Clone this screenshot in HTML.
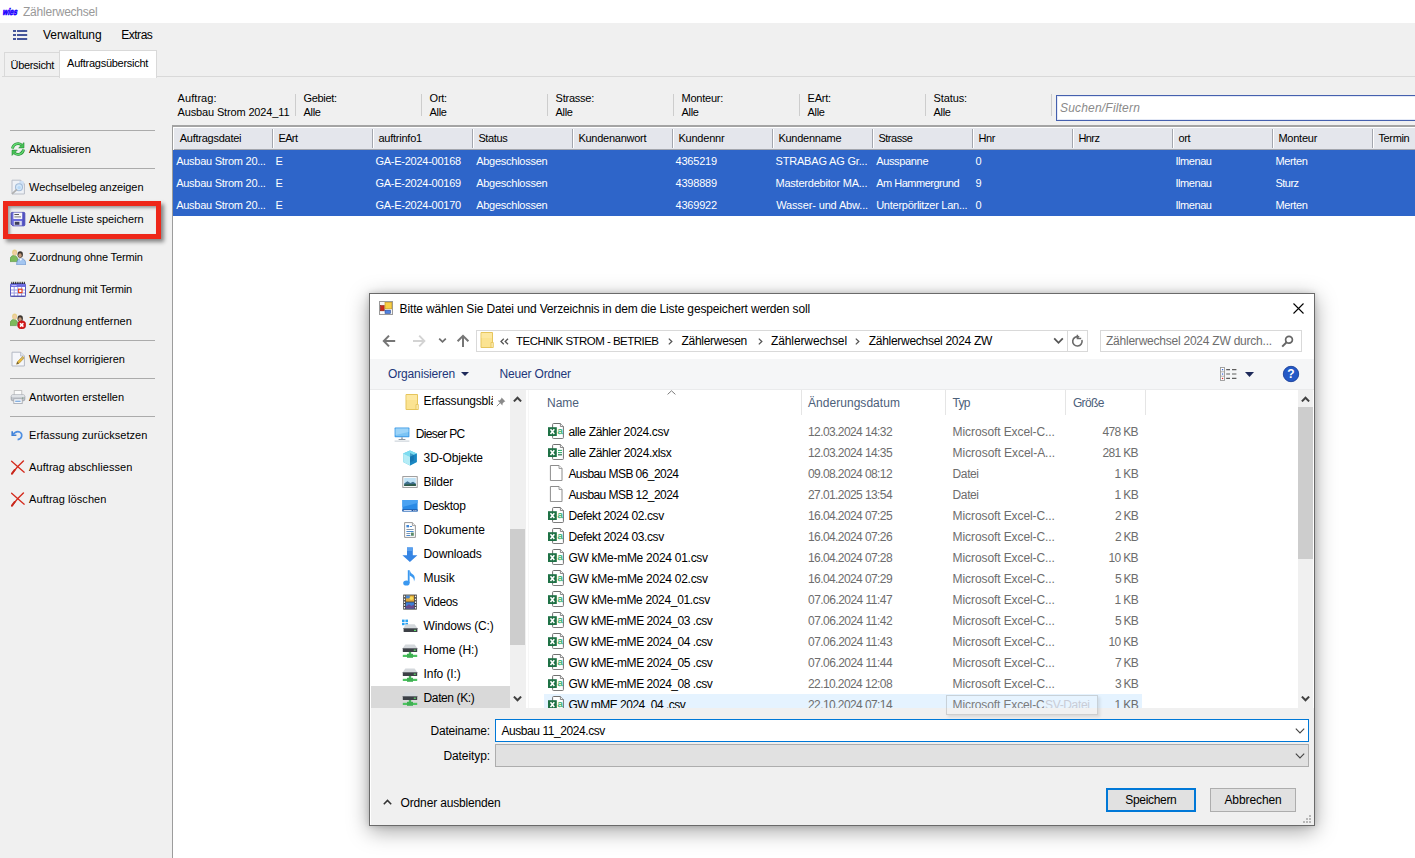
<!DOCTYPE html>
<html lang="de">
<head>
<meta charset="utf-8">
<title>Zählerwechsel</title>
<style>
*{box-sizing:border-box;margin:0;padding:0}
html,body{width:1415px;height:858px;overflow:hidden;background:#f0f0f0;font-family:"Liberation Sans",sans-serif;font-size:11px;color:#000}
.a{position:absolute}
.t{position:absolute;white-space:nowrap}
</style>
</head>
<body>
<div class="a" style="left:0px;top:0px;width:1415px;height:23px;background:#fff;"></div>
<svg class="a" style="left:2px;top:5px" width="17" height="11" viewBox="0 0 17 11"><g transform="skewX(-14)"><text x="2.6" y="9.7" font-family="Liberation Sans" font-weight="bold" font-size="9.5" textLength="14.6" lengthAdjust="spacingAndGlyphs" fill="#1c00ff" stroke="#1c00ff" stroke-width=".7">wies</text></g></svg>
<div class="t" style="left:23.0px;top:3.7px;font-size:12px;line-height:16px;color:#999;letter-spacing:-0.22px;">Zählerwechsel</div>
<svg class="a" style="left:13px;top:30px" width="15" height="10" viewBox="0 0 15 10"><g fill="#44549a"><rect x="0" y="0" width="3" height="2"/><rect x="4" y="0" width="10.2" height="2"/><rect x="0" y="4" width="3" height="2"/><rect x="4" y="4" width="10.2" height="2"/><rect x="0" y="8" width="3" height="2"/><rect x="4" y="8" width="10.2" height="2"/></g></svg>
<div class="t" style="left:43.1px;top:26.6px;font-size:12px;line-height:16px;letter-spacing:-0.10px;">Verwaltung</div>
<div class="t" style="left:121.2px;top:26.6px;font-size:12px;line-height:16px;letter-spacing:-0.47px;">Extras</div>
<div class="a" style="left:4px;top:52px;width:56px;height:25px;background:#f0f0f0;border:1px solid #d9d9d9;border-bottom:none"></div>
<div class="a" style="left:2px;top:76px;width:1413px;height:1px;background:#d9d9d9;"></div>
<div class="t" style="left:10.6px;top:57.6px;font-size:11px;line-height:14px;letter-spacing:-0.33px;">Übersicht</div>
<div class="a" style="left:59px;top:50px;width:98px;height:28px;background:#fff;border:1px solid #d9d9d9;border-bottom:none"></div>
<div class="t" style="left:67.1px;top:56.0px;font-size:11px;line-height:14px;letter-spacing:-0.27px;">Auftragsübersicht</div>
<div class="a" style="left:10px;top:130px;width:145px;height:1px;background:#ababab;"></div>
<div class="a" style="left:10px;top:168px;width:145px;height:1px;background:#ababab;"></div>
<div class="a" style="left:10px;top:340px;width:145px;height:1px;background:#ababab;"></div>
<div class="a" style="left:10px;top:378px;width:145px;height:1px;background:#ababab;"></div>
<div class="a" style="left:10px;top:416px;width:145px;height:1px;background:#ababab;"></div>
<svg class="a" style="left:10px;top:141px" width="16" height="16" viewBox="0 0 16 16"><path d="M2.5 7.5 A5.5 5.5 0 0 1 11.6 4" fill="none" stroke="#238d33" stroke-width="2.7"/><path d="M2.5 7.5 A5.5 5.5 0 0 1 11.6 4" fill="none" stroke="#62d670" stroke-width="1.4"/><path d="M14 1.6 V6.9 H8.7 Z" fill="#46c255" stroke="#238d33" stroke-width=".6"/><g transform="rotate(180 8 8)"><path d="M2.5 7.5 A5.5 5.5 0 0 1 11.6 4" fill="none" stroke="#238d33" stroke-width="2.7"/><path d="M2.5 7.5 A5.5 5.5 0 0 1 11.6 4" fill="none" stroke="#62d670" stroke-width="1.4"/><path d="M14 1.6 V6.9 H8.7 Z" fill="#46c255" stroke="#238d33" stroke-width=".6"/></g></svg>
<div class="t" style="left:29.1px;top:142.0px;font-size:11px;line-height:14px;letter-spacing:-0.11px;">Aktualisieren</div>
<svg class="a" style="left:10px;top:179px" width="16" height="16" viewBox="0 0 16 16"><path d="M2 1.2 H10.6 L14.4 5 V15 H2 Z" fill="#eef1f6" stroke="#b9bec8" stroke-width="1"/><path d="M10.6 1.2 V5 H14.4" fill="#cfe0f4" stroke="#b9bec8" stroke-width=".8"/><rect x="9" y="2" width="4.6" height="5" fill="#cfe2f8" opacity=".8"/><circle cx="9" cy="8.2" r="3.5" fill="#d4e8fa" stroke="#a4bcd8" stroke-width="1.1"/><circle cx="9.2" cy="8.6" r="1.7" fill="#b8d8f6"/><path d="M6.4 10.8 L2.6 14.4" stroke="#b0b0b0" stroke-width="1.7" stroke-linecap="round"/></svg>
<div class="t" style="left:29.1px;top:180.0px;font-size:11px;line-height:14px;letter-spacing:-0.11px;">Wechselbeleg anzeigen</div>
<svg class="a" style="left:10px;top:211px" width="16" height="16" viewBox="0 0 16 16"><path d="M1.2 2.4 Q1.2 1.4 2.2 1.4 H13.8 Q14.8 1.4 14.8 2.4 V13.8 Q14.8 14.8 13.8 14.8 H2.8 L1.2 13.2 Z" fill="#6c6cdc" stroke="#4a4ab4" stroke-width="1"/><path d="M12.4 1.6 H14.4 V14.4 H12.4 Z" fill="#5050be"/><rect x="3.4" y="1.6" width="8.8" height="6.4" fill="#f6f6fb"/><rect x="4.4" y="3" width="4.6" height="1" fill="#555"/><rect x="4.4" y="5.4" width="6.6" height="1" fill="#777"/><rect x="3.8" y="10" width="8" height="4.4" fill="#dcdcf0"/><rect x="4.8" y="10.8" width="4.6" height="3" fill="#3c3c5a"/></svg>
<div class="t" style="left:29.1px;top:212.0px;font-size:11px;line-height:14px;letter-spacing:-0.07px;">Aktuelle Liste speichern</div>
<svg class="a" style="left:10px;top:249px" width="16" height="16" viewBox="0 0 16 16"><path d="M-.2 12.6 Q-.2 6.6 3.8 6.4 Q8 6.6 8 12.6 Z" fill="#7dbb5c" stroke="#4f8f38" stroke-width=".6"/><ellipse cx="4.6" cy="3.4" rx="2.5" ry="3" fill="#e6cf86"/><ellipse cx="4.8" cy="4" rx="1.6" ry="2" fill="#f1cda6"/><ellipse cx="10.2" cy="5.6" rx="2.7" ry="3.3" fill="#3c3630"/><ellipse cx="10" cy="6.4" rx="1.7" ry="2.2" fill="#c49a78"/><path d="M6.6 15.8 Q6.6 9.6 10.8 9.4 Q15.9 9.6 15.9 15.8 Z" fill="#a4c6f0" stroke="#5a86c4" stroke-width=".6"/><path d="M9.4 9.6 L10.8 12 L12.2 9.6 Z" fill="#fff"/></svg>
<div class="t" style="left:29.1px;top:250.0px;font-size:11px;line-height:14px;letter-spacing:-0.14px;">Zuordnung ohne Termin</div>
<svg class="a" style="left:10px;top:281px" width="16" height="16" viewBox="0 0 16 16"><rect x=".5" y="2.6" width="15" height="13" rx="1" fill="#fff" stroke="#5a5ac0" stroke-width="1"/><rect x=".5" y="3" width="15" height="3" fill="#6e6ee2"/><rect x="1.6" y="4" width="5" height="1" fill="#b8b8f4"/><g stroke="#1a1a1a" stroke-width=".9"><path d="M1.8 .8V3M3.6 .8V3M5.4 .8V3M7.2 .8V3M9 .8V3M10.8 .8V3M12.6 .8V3M14.4 .8V3"/></g><g stroke="#9a9ae0" stroke-width="1"><path d="M1 9H15M1 12H15M4.2 6V15M7.8 6V15M11.6 6V15"/></g><rect x=".5" y="14.6" width="15" height="1" fill="#4a4aa8"/><rect x="8.6" y="8.2" width="3.4" height="3.4" fill="#fff" stroke="#e8401c" stroke-width="1.2"/></svg>
<div class="t" style="left:29.1px;top:282.0px;font-size:11px;line-height:14px;letter-spacing:-0.20px;">Zuordnung mit Termin</div>
<svg class="a" style="left:10px;top:313px" width="16" height="16" viewBox="0 0 16 16"><path d="M-.2 12.6 Q-.2 6.6 3.8 6.4 Q8 6.6 8 12.6 Z" fill="#7dbb5c" stroke="#4f8f38" stroke-width=".6"/><ellipse cx="4.6" cy="3.4" rx="2.5" ry="3" fill="#e6cf86"/><ellipse cx="4.8" cy="4" rx="1.6" ry="2" fill="#f1cda6"/><ellipse cx="10.2" cy="5.6" rx="2.7" ry="3.3" fill="#3c3630"/><ellipse cx="10" cy="6.4" rx="1.7" ry="2.2" fill="#c49a78"/><path d="M6.6 13 Q6.6 9.6 9 9.4 V13 Z" fill="#a4c6f0"/><circle cx="11.7" cy="11.9" r="4.1" fill="#d41818" stroke="#a80c0c" stroke-width=".5"/><path d="M10 10.2 L13.4 13.6 M13.4 10.2 L10 13.6" stroke="#fff" stroke-width="1.6"/></svg>
<div class="t" style="left:29.1px;top:314.0px;font-size:11px;line-height:14px;">Zuordnung entfernen</div>
<svg class="a" style="left:10px;top:351px" width="16" height="16" viewBox="0 0 16 16"><path d="M2 1.2 H10.6 L14.4 5 V15 H2 Z" fill="#f5f6fa" stroke="#b4b9c4" stroke-width="1"/><path d="M10.6 1.2 V5 H14.4" fill="#dfe4ee" stroke="#b4b9c4" stroke-width=".8"/><path d="M12.6 5.4 L14.2 7 L9 12.4 L6.6 13.2 L7.4 10.8 Z" fill="#e8bc40" stroke="#b08a24" stroke-width=".6"/><path d="M6.6 13.2 L7.4 10.8 L9 12.4 Z" fill="#6a5a3a"/><path d="M11.6 6.4 L13.2 8" stroke="#8aa0c0" stroke-width=".8"/></svg>
<div class="t" style="left:29.1px;top:352.0px;font-size:11px;line-height:14px;letter-spacing:-0.07px;">Wechsel korrigieren</div>
<svg class="a" style="left:10px;top:389px" width="16" height="16" viewBox="0 0 16 16"><rect x="4.2" y="1.6" width="7.6" height="4.8" fill="#fbfbfb" stroke="#b8b8b8" stroke-width=".8"/><rect x="1.2" y="5.8" width="13.6" height="6" rx="1.6" fill="#c2c6cc" stroke="#969aa2" stroke-width=".8"/><rect x="1.4" y="5.8" width="13.2" height="2.4" rx="1.2" fill="#dfe2e6"/><rect x="3.8" y="9.8" width="8.4" height="4.8" fill="#f6f8fb" stroke="#a2a6ae" stroke-width=".8"/><rect x="5.2" y="11.6" width="5.4" height="1.4" fill="#86b0e0"/><rect x="12" y="8.6" width="1.4" height=".9" fill="#6a8a6a"/></svg>
<div class="t" style="left:29.1px;top:390.0px;font-size:11px;line-height:14px;letter-spacing:0.05px;">Antworten erstellen</div>
<svg class="a" style="left:10px;top:427px" width="16" height="16" viewBox="0 0 16 16"><path d="M2.2 4.2 V8.2 H6.4" fill="none" stroke="#3f7fd4" stroke-width="1.6"/><path d="M2.8 7.8 Q5.4 4 9 4.8 Q12.4 6 11.6 9.6 Q10.8 12.2 7.6 12.6" fill="none" stroke="#4f8fe2" stroke-width="1.7"/></svg>
<div class="t" style="left:29.1px;top:428.0px;font-size:11px;line-height:14px;letter-spacing:0.04px;">Erfassung zurücksetzen</div>
<svg class="a" style="left:10px;top:459px" width="16" height="16" viewBox="0 0 16 16"><path d="M1.6 2.2 Q7 7 14.2 13.2" fill="none" stroke="#d42a1c" stroke-width="1.3" stroke-linecap="round"/><path d="M13.4 2 Q8 6.6 2 14.6" fill="none" stroke="#d42a1c" stroke-width="1.5" stroke-linecap="round"/><path d="M4.6 11 L2 14.6" stroke="#c8281c" stroke-width="2" stroke-linecap="round"/></svg>
<div class="t" style="left:29.1px;top:460.0px;font-size:11px;line-height:14px;letter-spacing:0.06px;">Auftrag abschliessen</div>
<svg class="a" style="left:10px;top:491px" width="16" height="16" viewBox="0 0 16 16"><path d="M1.6 2.2 Q7 7 14.2 13.2" fill="none" stroke="#d42a1c" stroke-width="1.3" stroke-linecap="round"/><path d="M13.4 2 Q8 6.6 2 14.6" fill="none" stroke="#d42a1c" stroke-width="1.5" stroke-linecap="round"/><path d="M4.6 11 L2 14.6" stroke="#c8281c" stroke-width="2" stroke-linecap="round"/></svg>
<div class="t" style="left:29.1px;top:492.0px;font-size:11px;line-height:14px;letter-spacing:0.06px;">Auftrag löschen</div>
<div class="a" style="left:3px;top:201px;width:158px;height:38px;border:5px solid #ee2719;box-shadow:3px 3px 4px rgba(0,0,0,.45), inset 2px 2px 3px rgba(0,0,0,.35)"></div>
<div class="t" style="left:177.6px;top:91.3px;font-size:11px;line-height:14px;letter-spacing:0.06px;">Auftrag:</div>
<div class="t" style="left:177.6px;top:105.0px;font-size:11px;line-height:14px;letter-spacing:-0.15px;">Ausbau Strom 2024_11</div>
<div class="a" style="left:295px;top:94px;width:1px;height:22px;background:#cdcdcd;"></div>
<div class="t" style="left:303.6px;top:91.3px;font-size:11px;line-height:14px;letter-spacing:-0.35px;">Gebiet:</div>
<div class="t" style="left:303.6px;top:105.0px;font-size:11px;line-height:14px;letter-spacing:-0.34px;">Alle</div>
<div class="a" style="left:421px;top:94px;width:1px;height:22px;background:#cdcdcd;"></div>
<div class="t" style="left:429.6px;top:91.3px;font-size:11px;line-height:14px;letter-spacing:-0.25px;">Ort:</div>
<div class="t" style="left:429.6px;top:105.0px;font-size:11px;line-height:14px;letter-spacing:-0.34px;">Alle</div>
<div class="a" style="left:547px;top:94px;width:1px;height:22px;background:#cdcdcd;"></div>
<div class="t" style="left:555.6px;top:91.3px;font-size:11px;line-height:14px;letter-spacing:-0.25px;">Strasse:</div>
<div class="t" style="left:555.6px;top:105.0px;font-size:11px;line-height:14px;letter-spacing:-0.34px;">Alle</div>
<div class="a" style="left:673px;top:94px;width:1px;height:22px;background:#cdcdcd;"></div>
<div class="t" style="left:681.6px;top:91.3px;font-size:11px;line-height:14px;letter-spacing:-0.25px;">Monteur:</div>
<div class="t" style="left:681.6px;top:105.0px;font-size:11px;line-height:14px;letter-spacing:-0.34px;">Alle</div>
<div class="a" style="left:799px;top:94px;width:1px;height:22px;background:#cdcdcd;"></div>
<div class="t" style="left:807.6px;top:91.3px;font-size:11px;line-height:14px;letter-spacing:-0.25px;">EArt:</div>
<div class="t" style="left:807.6px;top:105.0px;font-size:11px;line-height:14px;letter-spacing:-0.34px;">Alle</div>
<div class="a" style="left:925px;top:94px;width:1px;height:22px;background:#cdcdcd;"></div>
<div class="t" style="left:933.6px;top:91.3px;font-size:11px;line-height:14px;letter-spacing:-0.12px;">Status:</div>
<div class="t" style="left:933.6px;top:105.0px;font-size:11px;line-height:14px;letter-spacing:-0.34px;">Alle</div>
<div class="a" style="left:1051px;top:94px;width:1px;height:22px;background:#cdcdcd;"></div>
<div class="a" style="left:1056px;top:95px;width:365px;height:26px;background:#fff;border:1px solid #4560ae;box-shadow:inset 0 0 0 1px #e4e9f6"></div>
<div class="t" style="left:1060.0px;top:100.5px;font-size:12px;line-height:15px;color:#8a8a8a;letter-spacing:0.19px;font-style:italic;">Suchen/Filtern</div>
<div class="a" style="left:172px;top:125px;width:1243px;height:733px;background:#fff;border-left:1px solid #9c9c9c;border-top:2px solid #a4a4a4"></div>
<div class="a" style="left:174px;top:128px;width:1241px;height:22px;background:#e4e6ec;border-bottom:1px solid #a3a6ae"></div>
<div class="a" style="left:272px;top:129px;width:1px;height:19px;background:#a3a6ae;"></div>
<div class="a" style="left:273px;top:129px;width:1px;height:19px;background:#fff;"></div>
<div class="t" style="left:179.8px;top:131.4px;font-size:11px;line-height:14px;letter-spacing:-0.26px;">Auftragsdatei</div>
<div class="a" style="left:372px;top:129px;width:1px;height:19px;background:#a3a6ae;"></div>
<div class="a" style="left:373px;top:129px;width:1px;height:19px;background:#fff;"></div>
<div class="t" style="left:278.4px;top:131.4px;font-size:11px;line-height:14px;letter-spacing:-0.60px;">EArt</div>
<div class="a" style="left:472px;top:129px;width:1px;height:19px;background:#a3a6ae;"></div>
<div class="a" style="left:473px;top:129px;width:1px;height:19px;background:#fff;"></div>
<div class="t" style="left:378.4px;top:131.4px;font-size:11px;line-height:14px;letter-spacing:-0.23px;">auftrinfo1</div>
<div class="a" style="left:572px;top:129px;width:1px;height:19px;background:#a3a6ae;"></div>
<div class="a" style="left:573px;top:129px;width:1px;height:19px;background:#fff;"></div>
<div class="t" style="left:478.4px;top:131.4px;font-size:11px;line-height:14px;letter-spacing:-0.36px;">Status</div>
<div class="a" style="left:672px;top:129px;width:1px;height:19px;background:#a3a6ae;"></div>
<div class="a" style="left:673px;top:129px;width:1px;height:19px;background:#fff;"></div>
<div class="t" style="left:578.4px;top:131.4px;font-size:11px;line-height:14px;letter-spacing:-0.25px;">Kundenanwort</div>
<div class="a" style="left:772px;top:129px;width:1px;height:19px;background:#a3a6ae;"></div>
<div class="a" style="left:773px;top:129px;width:1px;height:19px;background:#fff;"></div>
<div class="t" style="left:678.4px;top:131.4px;font-size:11px;line-height:14px;letter-spacing:-0.21px;">Kundennr</div>
<div class="a" style="left:872px;top:129px;width:1px;height:19px;background:#a3a6ae;"></div>
<div class="a" style="left:873px;top:129px;width:1px;height:19px;background:#fff;"></div>
<div class="t" style="left:778.4px;top:131.4px;font-size:11px;line-height:14px;letter-spacing:-0.25px;">Kundenname</div>
<div class="a" style="left:972px;top:129px;width:1px;height:19px;background:#a3a6ae;"></div>
<div class="a" style="left:973px;top:129px;width:1px;height:19px;background:#fff;"></div>
<div class="t" style="left:878.4px;top:131.4px;font-size:11px;line-height:14px;letter-spacing:-0.47px;">Strasse</div>
<div class="a" style="left:1072px;top:129px;width:1px;height:19px;background:#a3a6ae;"></div>
<div class="a" style="left:1073px;top:129px;width:1px;height:19px;background:#fff;"></div>
<div class="t" style="left:978.4px;top:131.4px;font-size:11px;line-height:14px;letter-spacing:-0.38px;">Hnr</div>
<div class="a" style="left:1172px;top:129px;width:1px;height:19px;background:#a3a6ae;"></div>
<div class="a" style="left:1173px;top:129px;width:1px;height:19px;background:#fff;"></div>
<div class="t" style="left:1078.4px;top:131.4px;font-size:11px;line-height:14px;letter-spacing:-0.56px;">Hnrz</div>
<div class="a" style="left:1272px;top:129px;width:1px;height:19px;background:#a3a6ae;"></div>
<div class="a" style="left:1273px;top:129px;width:1px;height:19px;background:#fff;"></div>
<div class="t" style="left:1178.4px;top:131.4px;font-size:11px;line-height:14px;letter-spacing:-0.28px;">ort</div>
<div class="a" style="left:1372px;top:129px;width:1px;height:19px;background:#a3a6ae;"></div>
<div class="a" style="left:1373px;top:129px;width:1px;height:19px;background:#fff;"></div>
<div class="t" style="left:1278.4px;top:131.4px;font-size:11px;line-height:14px;letter-spacing:-0.24px;">Monteur</div>
<div class="a" style="left:1472px;top:129px;width:1px;height:19px;background:#a3a6ae;"></div>
<div class="a" style="left:1473px;top:129px;width:1px;height:19px;background:#fff;"></div>
<div class="t" style="left:1378.4px;top:131.4px;font-size:11px;line-height:14px;letter-spacing:-0.34px;">Termin</div>
<div class="a" style="left:173px;top:150px;width:1242px;height:22px;background:#2e65c9;"></div>
<div class="t" style="left:176.2px;top:154.3px;font-size:11px;line-height:14px;color:#fff;letter-spacing:-0.26px;">Ausbau Strom 20...</div>
<div class="t" style="left:275.5px;top:154.3px;font-size:11px;line-height:14px;color:#fff;">E</div>
<div class="t" style="left:375.5px;top:154.3px;font-size:11px;line-height:14px;color:#fff;letter-spacing:-0.26px;">GA-E-2024-00168</div>
<div class="t" style="left:476.2px;top:154.3px;font-size:11px;line-height:14px;color:#fff;letter-spacing:-0.26px;">Abgeschlossen</div>
<div class="t" style="left:675.5px;top:154.3px;font-size:11px;line-height:14px;color:#fff;letter-spacing:-0.20px;">4365219</div>
<div class="t" style="left:775.5px;top:154.3px;font-size:11px;line-height:14px;color:#fff;letter-spacing:-0.18px;">STRABAG AG Gr...</div>
<div class="t" style="left:876.2px;top:154.3px;font-size:11px;line-height:14px;color:#fff;letter-spacing:-0.34px;">Ausspanne</div>
<div class="t" style="left:975.5px;top:154.3px;font-size:11px;line-height:14px;color:#fff;">0</div>
<div class="t" style="left:1175.5px;top:154.3px;font-size:11px;line-height:14px;color:#fff;letter-spacing:-0.45px;">Ilmenau</div>
<div class="t" style="left:1275.5px;top:154.3px;font-size:11px;line-height:14px;color:#fff;letter-spacing:-0.38px;">Merten</div>
<div class="a" style="left:173px;top:172px;width:1242px;height:22px;background:#2e65c9;"></div>
<div class="t" style="left:176.2px;top:176.3px;font-size:11px;line-height:14px;color:#fff;letter-spacing:-0.26px;">Ausbau Strom 20...</div>
<div class="t" style="left:275.5px;top:176.3px;font-size:11px;line-height:14px;color:#fff;">E</div>
<div class="t" style="left:375.5px;top:176.3px;font-size:11px;line-height:14px;color:#fff;letter-spacing:-0.26px;">GA-E-2024-00169</div>
<div class="t" style="left:476.2px;top:176.3px;font-size:11px;line-height:14px;color:#fff;letter-spacing:-0.26px;">Abgeschlossen</div>
<div class="t" style="left:675.5px;top:176.3px;font-size:11px;line-height:14px;color:#fff;letter-spacing:-0.20px;">4398889</div>
<div class="t" style="left:775.5px;top:176.3px;font-size:11px;line-height:14px;color:#fff;letter-spacing:-0.22px;">Masterdebitor MA...</div>
<div class="t" style="left:876.2px;top:176.3px;font-size:11px;line-height:14px;color:#fff;letter-spacing:-0.50px;">Am Hammergrund</div>
<div class="t" style="left:975.5px;top:176.3px;font-size:11px;line-height:14px;color:#fff;">9</div>
<div class="t" style="left:1175.5px;top:176.3px;font-size:11px;line-height:14px;color:#fff;letter-spacing:-0.45px;">Ilmenau</div>
<div class="t" style="left:1275.5px;top:176.3px;font-size:11px;line-height:14px;color:#fff;letter-spacing:-0.54px;">Sturz</div>
<div class="a" style="left:173px;top:194px;width:1242px;height:22px;background:#2e65c9;"></div>
<div class="t" style="left:176.2px;top:198.3px;font-size:11px;line-height:14px;color:#fff;letter-spacing:-0.26px;">Ausbau Strom 20...</div>
<div class="t" style="left:275.5px;top:198.3px;font-size:11px;line-height:14px;color:#fff;">E</div>
<div class="t" style="left:375.5px;top:198.3px;font-size:11px;line-height:14px;color:#fff;letter-spacing:-0.26px;">GA-E-2024-00170</div>
<div class="t" style="left:476.2px;top:198.3px;font-size:11px;line-height:14px;color:#fff;letter-spacing:-0.26px;">Abgeschlossen</div>
<div class="t" style="left:675.5px;top:198.3px;font-size:11px;line-height:14px;color:#fff;letter-spacing:-0.20px;">4369922</div>
<div class="t" style="left:776.2px;top:198.3px;font-size:11px;line-height:14px;color:#fff;letter-spacing:-0.14px;">Wasser- und Abw...</div>
<div class="t" style="left:876.2px;top:198.3px;font-size:11px;line-height:14px;color:#fff;letter-spacing:-0.26px;">Unterpörlitzer Lan...</div>
<div class="t" style="left:975.5px;top:198.3px;font-size:11px;line-height:14px;color:#fff;">0</div>
<div class="t" style="left:1175.5px;top:198.3px;font-size:11px;line-height:14px;color:#fff;letter-spacing:-0.45px;">Ilmenau</div>
<div class="t" style="left:1275.5px;top:198.3px;font-size:11px;line-height:14px;color:#fff;letter-spacing:-0.38px;">Merten</div>
<div class="a" style="left:369px;top:293px;width:946px;height:533px;background:#fff;border:1px solid #6a6a6a;box-shadow:0 5px 20px rgba(0,0,0,.36),0 0 6px rgba(0,0,0,.16)"></div>
<svg class="a" style="left:379px;top:301px" width="14" height="14" viewBox="0 0 14 14"><rect x=".5" y=".5" width="13" height="13" fill="#f4f4f4" stroke="#9a9a9a"/><rect x="1.4" y="4.6" width="3.8" height="5.2" fill="#c8281c" stroke="#8a1a10" stroke-width=".6"/><rect x="6" y="1.4" width="6.8" height="6.4" fill="#f7cf45" stroke="#c89a20" stroke-width=".7"/><rect x="6" y="9.2" width="5.4" height="3.2" fill="#4f82e0" stroke="#2a4a98" stroke-width=".6"/><rect x="1.4" y="10.8" width="1.6" height="1.8" fill="#fff"/><rect x="3.6" y="10.8" width="1.6" height="1.8" fill="#fff"/></svg>
<div class="t" style="left:399.6px;top:301.0px;font-size:12px;line-height:16px;letter-spacing:-0.15px;">Bitte wählen Sie Datei und Verzeichnis in dem die Liste gespeichert werden soll</div>
<svg class="a" style="left:1293px;top:303px" width="11" height="11" viewBox="0 0 11 11"><path d="M.5 .5 L10.5 10.5 M10.5 .5 L.5 10.5" stroke="#000" stroke-width="1.1" fill="none"/></svg>
<svg class="a" style="left:382px;top:334px" width="14" height="14" viewBox="0 0 14 14"><path d="M13.2 7 H2.4 M7 1.6 L1.8 7 L7 12.4" stroke="#767676" stroke-width="2" fill="none"/></svg>
<svg class="a" style="left:412px;top:334px" width="14" height="14" viewBox="0 0 14 14"><path d="M1 7 H11.8 M7.2 1.6 L12.4 7 L7.2 12.4" stroke="#d3d3d3" stroke-width="1.9" fill="none"/></svg>
<svg class="a" style="left:438px;top:337px" width="9" height="7" viewBox="0 0 9 7"><path d="M1.2 1.6 L4.5 4.9 L7.8 1.6" stroke="#6e6e6e" stroke-width="1.7" fill="none"/></svg>
<svg class="a" style="left:456px;top:334px" width="14" height="14" viewBox="0 0 14 14"><path d="M7 13 V2 M1.6 7.2 L7 1.8 L12.4 7.2" stroke="#767676" stroke-width="2" fill="none"/></svg>
<div class="a" style="left:476px;top:330px;width:612px;height:22px;background:#fff;border:1px solid #d9d9d9"></div>
<div class="a" style="left:1067px;top:330px;width:1px;height:22px;background:#d9d9d9;"></div>
<svg class="a" style="left:480px;top:332px" width="14" height="16" viewBox="0 0 14 16"><path d="M1 .5 H12.5 V15.5 H1 Z" fill="#fbe391" stroke="#e6c55c" stroke-width="1"/><path d="M1.5 1 H12 V6 H1.5 Z" fill="#fdeaa8" opacity=".7"/><path d="M11 10.5 H13.3 V15.5 H11 Z" fill="#fdeeb4" stroke="#e6c55c" stroke-width=".9"/></svg>
<svg class="a" style="left:500px;top:338px" width="9" height="7" viewBox="0 0 9 7"><path d="M3.8 .8 L1 3.5 L3.8 6.2 M8 .8 L5.2 3.5 L8 6.2" stroke="#555" stroke-width="1.3" fill="none"/></svg>
<div class="t" style="left:516.0px;top:332.8px;font-size:11.5px;line-height:16px;letter-spacing:-0.53px;">TECHNIK STROM - BETRIEB</div>
<div class="t" style="left:681.6px;top:332.8px;font-size:12px;line-height:16px;letter-spacing:-0.30px;">Zählerwesen</div>
<div class="t" style="left:771.0px;top:332.8px;font-size:12px;line-height:16px;letter-spacing:-0.11px;">Zählerwechsel</div>
<div class="t" style="left:868.8px;top:332.8px;font-size:12px;line-height:16px;letter-spacing:-0.29px;">Zählerwechsel 2024 ZW</div>
<svg class="a" style="left:667.7px;top:338px" width="5" height="7" viewBox="0 0 5 7"><path d="M.8 .6 L3.8 3.5 L.8 6.4" stroke="#555" stroke-width="1.3" fill="none"/></svg>
<svg class="a" style="left:757.6px;top:338px" width="5" height="7" viewBox="0 0 5 7"><path d="M.8 .6 L3.8 3.5 L.8 6.4" stroke="#555" stroke-width="1.3" fill="none"/></svg>
<svg class="a" style="left:855px;top:338px" width="5" height="7" viewBox="0 0 5 7"><path d="M.8 .6 L3.8 3.5 L.8 6.4" stroke="#555" stroke-width="1.3" fill="none"/></svg>
<svg class="a" style="left:1053px;top:337px" width="11" height="8" viewBox="0 0 11 8"><path d="M1.2 1.4 L5.5 5.8 L9.8 1.4" stroke="#555" stroke-width="1.8" fill="none"/></svg>
<svg class="a" style="left:1071px;top:334px" width="13" height="14" viewBox="0 0 13 14"><path d="M8.2 3 A4.7 4.7 0 1 0 10.9 6" stroke="#6a6a6a" stroke-width="1.6" fill="none"/><path d="M6.4 .8 V4.4 H10.2" stroke="#6a6a6a" stroke-width="1.5" fill="none"/></svg>
<div class="a" style="left:1100px;top:330px;width:202px;height:22px;background:#fff;border:1px solid #d9d9d9"></div>
<div class="t" style="left:1106.0px;top:332.8px;font-size:12px;line-height:16px;color:#6d6d6d;letter-spacing:-0.23px;">Zählerwechsel 2024 ZW durch...</div>
<svg class="a" style="left:1281px;top:335px" width="13" height="13" viewBox="0 0 13 13"><circle cx="8" cy="4.8" r="3.4" stroke="#666" stroke-width="1.7" fill="none"/><path d="M5.6 7.2 L1.2 11.6" stroke="#666" stroke-width="2" fill="none"/></svg>
<div class="a" style="left:370px;top:359px;width:944px;height:31px;background:#f5f6f7;border-bottom:1px solid #eaebec"></div>
<div class="t" style="left:388.0px;top:366.0px;font-size:12px;line-height:16px;color:#22377a;letter-spacing:-0.14px;">Organisieren</div>
<svg class="a" style="left:461px;top:372px" width="8" height="4" viewBox="0 0 8 4"><path d="M0 0 H8 L4 4 Z" fill="#1e2a5a"/></svg>
<div class="t" style="left:499.5px;top:366.0px;font-size:12px;line-height:16px;color:#22377a;letter-spacing:-0.16px;">Neuer Ordner</div>
<svg class="a" style="left:1220px;top:367px" width="17" height="14" viewBox="0 0 17 14"><rect x=".5" y=".5" width="4" height="13" fill="#fff" stroke="#9a9a9a" stroke-width=".9"/><path d="M.5 4.8H4.5M.5 9.2H4.5" stroke="#9a9a9a" stroke-width=".8"/><rect x="1.9" y="2" width="1.3" height="1.3" fill="#3a6ad8"/><rect x="1.9" y="6.4" width="1.3" height="1.3" fill="#3a6ad8"/><rect x="1.9" y="10.8" width="1.3" height="1.3" fill="#d83030"/><g stroke="#5e5e5e" stroke-width="1.1"><path d="M6.2 2.6H10M12 2.6H16.4M6.2 7H10M12 7H16.4M6.2 11.4H10M12 11.4H16.4"/></g></svg>
<svg class="a" style="left:1245px;top:372px" width="9" height="5" viewBox="0 0 9 5"><path d="M0 0 H9 L4.5 5 Z" fill="#1e2a5a"/></svg>
<svg class="a" style="left:1282px;top:365px" width="18" height="18" viewBox="0 0 18 18"><circle cx="9" cy="9" r="7.7" fill="#2459c6" stroke="#1a3f98" stroke-width=".9"/><text x="9" y="13.2" font-family="Liberation Sans" font-weight="bold" font-size="12" fill="#fff" text-anchor="middle">?</text></svg>
<div class="a" style="left:371px;top:686px;width:139px;height:22px;background:#d9d9d9;"></div>
<svg class="a" style="left:405px;top:394px" width="14" height="16" viewBox="0 0 14 16"><path d="M1 .5 H12.5 V15.5 H1 Z" fill="#fbe391" stroke="#e6c55c" stroke-width="1"/><path d="M1.5 1 H12 V6 H1.5 Z" fill="#fdeaa8" opacity=".7"/><path d="M11 10.5 H13.3 V15.5 H11 Z" fill="#fdeeb4" stroke="#e6c55c" stroke-width=".9"/></svg>
<div class="a" style="left:423.6px;top:393px;width:69.4px;height:18px;overflow:hidden"><span style="font-size:12px;line-height:16px;white-space:nowrap;letter-spacing:-0.2px">Erfassungsblätter</span></div>
<svg class="a" style="left:394px;top:426px" width="16" height="16" viewBox="0 0 16 16"><rect x=".6" y="1.6" width="14.8" height="9.6" rx=".6" fill="#3f9be6"/><rect x="1.6" y="2.6" width="12.8" height="7.6" fill="#7cc4f4"/><path d="M1.6 2.6 H14.4 V6 L1.6 9 Z" fill="#9dd4f8"/><rect x="7.2" y="11.2" width="1.6" height="2.2" fill="#9aa6b2"/><rect x="4.6" y="13" width="6.8" height="1" fill="#8a96a2"/><rect x=".6" y="14.6" width="14.8" height="1" fill="#c4ccd4"/></svg>
<div class="t" style="left:415.8px;top:426.0px;font-size:12px;line-height:16px;letter-spacing:-0.65px;">Dieser PC</div>
<svg class="a" style="left:402px;top:450px" width="16" height="16" viewBox="0 0 16 16"><path d="M8 .6 L14.8 3.6 V12 L8 15.4 L1.2 12 V3.6 Z" fill="#48c0e0"/><path d="M8 .6 L14.8 3.6 L8 6.8 L1.2 3.6 Z" fill="#7ddcf0"/><path d="M8 6.8 V15.4 L1.2 12 V3.6 Z" fill="#b4ecf6"/><path d="M8 6.8 V15.4 L14.8 12 V3.6 Z" fill="#1b86c2"/><path d="M8 3 L11.8 4.8 V10.6 L8 12.6 Z" fill="#0f6aa4" opacity=".55"/></svg>
<div class="t" style="left:423.6px;top:450.0px;font-size:12px;line-height:16px;letter-spacing:-0.14px;">3D-Objekte</div>
<svg class="a" style="left:402px;top:474px" width="16" height="16" viewBox="0 0 16 16"><rect x=".8" y="2.6" width="14.4" height="10.8" fill="#fdfdfd" stroke="#909090" stroke-width=".9"/><rect x="2.2" y="4" width="11.6" height="8" fill="#bfe2f6"/><path d="M2.2 9.4 L5.4 7.2 L8.4 9 L11 7.8 L13.8 9.4 V12 H2.2 Z" fill="#3f6f8c"/><path d="M2.2 10.6 L13.8 10 V12 H2.2 Z" fill="#2d5a46"/></svg>
<div class="t" style="left:423.6px;top:474.0px;font-size:12px;line-height:16px;letter-spacing:-0.23px;">Bilder</div>
<svg class="a" style="left:402px;top:498px" width="16" height="16" viewBox="0 0 16 16"><rect x=".4" y="2" width="15.2" height="11.4" fill="#2a8ae6"/><path d="M.4 2 H15.6 V5 L.4 9 Z" fill="#4aa2f2"/><rect x=".4" y="11.4" width="15.2" height="2" fill="#1c4f9c"/><rect x="1.6" y="12" width="8" height=".9" fill="#e8f0ff"/><rect x="11.4" y="12" width="1" height=".9" fill="#fff"/><rect x="13.4" y="12" width="1" height=".9" fill="#fff"/></svg>
<div class="t" style="left:423.6px;top:498.0px;font-size:12px;line-height:16px;letter-spacing:-0.29px;">Desktop</div>
<svg class="a" style="left:402px;top:522px" width="16" height="16" viewBox="0 0 16 16"><path d="M2.6 .6 H10.4 L13.4 3.6 V15.4 H2.6 Z" fill="#fff" stroke="#8c8c8c" stroke-width=".9"/><path d="M10.4 .6 V3.6 H13.4" fill="#eee" stroke="#8c8c8c" stroke-width=".8"/><rect x="4.4" y="3" width="2.6" height="2.4" fill="#3f86d6"/><g stroke-width="1"><path d="M7.8 4.5H10" stroke="#4a8ad0"/><path d="M4.4 7.5H11.6" stroke="#8a98a8"/><path d="M4.4 9.5H11.6" stroke="#4a8ad0"/><path d="M4.4 11.5H8.4" stroke="#8a98a8"/><path d="M4.4 13.5H8.4" stroke="#4a8ad0"/></g><rect x="9" y="10.6" width="2.8" height="3.2" fill="#5a8a6a"/></svg>
<div class="t" style="left:423.6px;top:522.0px;font-size:12px;line-height:16px;letter-spacing:-0.01px;">Dokumente</div>
<svg class="a" style="left:402px;top:546px" width="16" height="16" viewBox="0 0 16 16"><path d="M5 1.4 H10.8 V9.2 H15.4 L7.9 16 L.4 9.2 H5 Z" fill="#3585e4"/><path d="M5 1.4 H10.8 V5 H5 Z" fill="#5aa0ee"/></svg>
<div class="t" style="left:423.6px;top:546.0px;font-size:12px;line-height:16px;letter-spacing:-0.15px;">Downloads</div>
<svg class="a" style="left:402px;top:570px" width="16" height="16" viewBox="0 0 16 16"><ellipse cx="4.4" cy="13" rx="3.2" ry="2.6" fill="#3a98f0"/><path d="M5.8 .2 H7.6 V13 H5.8 Z" fill="#3a98f0"/><path d="M7.6 .2 Q8.4 3 11 4.6 Q14 7 12 11.6 Q12.4 7.6 7.6 5.6 Z" fill="#3a98f0"/></svg>
<div class="t" style="left:423.6px;top:570.0px;font-size:12px;line-height:16px;letter-spacing:-0.07px;">Musik</div>
<svg class="a" style="left:402px;top:594px" width="16" height="16" viewBox="0 0 16 16"><rect x="1.2" y=".6" width="13.6" height="15" fill="#3c3c3c"/><rect x="3.8" y="1.4" width="8.4" height="6.2" fill="#e0a83c"/><rect x="3.8" y="1.4" width="4" height="3" fill="#4a86d0"/><circle cx="9.4" cy="4.2" r="1.8" fill="#f4dc5a"/><rect x="3.8" y="8.4" width="8.4" height="6.2" fill="#3f7fd6"/><path d="M3.8 12.4 L7 10.2 L9.4 12 L12.2 10.4 V14.6 H3.8 Z" fill="#6a4a8a"/><g fill="#f4f4f4"><rect x="1.9" y="1.6" width="1.2" height="1.6"/><rect x="1.9" y="4.6" width="1.2" height="1.6"/><rect x="1.9" y="7.4" width="1.2" height="1.6"/><rect x="1.9" y="10.2" width="1.2" height="1.6"/><rect x="1.9" y="13" width="1.2" height="1.6"/><rect x="12.9" y="1.6" width="1.2" height="1.6"/><rect x="12.9" y="4.6" width="1.2" height="1.6"/><rect x="12.9" y="7.4" width="1.2" height="1.6"/><rect x="12.9" y="10.2" width="1.2" height="1.6"/><rect x="12.9" y="13" width="1.2" height="1.6"/></g></svg>
<div class="t" style="left:423.6px;top:594.0px;font-size:12px;line-height:16px;letter-spacing:-0.41px;">Videos</div>
<svg class="a" style="left:402px;top:618px" width="16" height="16" viewBox="0 0 16 16"><g fill="#2aa2f2"><rect x="0" y="1.6" width="2.6" height="2.4"/><rect x="3.4" y="1.6" width="2.6" height="2.4"/><rect x="0" y="4.8" width="2.6" height="2.4"/><rect x="3.4" y="4.8" width="2.6" height="2.4"/></g><path d="M3.6 6.2 H12.6 L15.4 10 H1.6 Z" fill="#d4d8dc"/><rect x="1.6" y="10" width="13.8" height="4" rx=".6" fill="#3c4046"/><rect x="1.6" y="10" width="13.8" height="1" fill="#6a6e74"/><rect x="12" y="11.8" width="2" height="1.2" fill="#5ee06a"/></svg>
<div class="t" style="left:423.6px;top:618.0px;font-size:12px;line-height:16px;letter-spacing:-0.17px;">Windows (C:)</div>
<svg class="a" style="left:402px;top:642px" width="16" height="16" viewBox="0 0 16 16"><path d="M3.4 2.6 H12.6 L15.2 6 H.8 Z" fill="#d4d8dc"/><rect x=".8" y="6" width="14.4" height="4" rx=".6" fill="#3c4046"/><rect x=".8" y="6" width="14.4" height="1" fill="#6a6e74"/><rect x="11.8" y="7.6" width="2" height="1.2" fill="#5ee06a"/><rect x="6.8" y="10" width="2.4" height="3" fill="#45b857"/><rect x=".8" y="12.8" width="14.4" height="2.2" fill="#4cc260"/><rect x="5" y="11.8" width="6" height="4" fill="#3fb052"/></svg>
<div class="t" style="left:423.6px;top:642.0px;font-size:12px;line-height:16px;letter-spacing:-0.08px;">Home (H:)</div>
<svg class="a" style="left:402px;top:666px" width="16" height="16" viewBox="0 0 16 16"><path d="M3.4 2.6 H12.6 L15.2 6 H.8 Z" fill="#d4d8dc"/><rect x=".8" y="6" width="14.4" height="4" rx=".6" fill="#3c4046"/><rect x=".8" y="6" width="14.4" height="1" fill="#6a6e74"/><rect x="11.8" y="7.6" width="2" height="1.2" fill="#5ee06a"/><rect x="6.8" y="10" width="2.4" height="3" fill="#45b857"/><rect x=".8" y="12.8" width="14.4" height="2.2" fill="#4cc260"/><rect x="5" y="11.8" width="6" height="4" fill="#3fb052"/></svg>
<div class="t" style="left:423.6px;top:666.0px;font-size:12px;line-height:16px;letter-spacing:-0.11px;">Info (I:)</div>
<svg class="a" style="left:402px;top:690px" width="16" height="16" viewBox="0 0 16 16"><path d="M3.4 2.6 H12.6 L15.2 6 H.8 Z" fill="#d4d8dc"/><rect x=".8" y="6" width="14.4" height="4" rx=".6" fill="#3c4046"/><rect x=".8" y="6" width="14.4" height="1" fill="#6a6e74"/><rect x="11.8" y="7.6" width="2" height="1.2" fill="#5ee06a"/><rect x="6.8" y="10" width="2.4" height="3" fill="#45b857"/><rect x=".8" y="12.8" width="14.4" height="2.2" fill="#4cc260"/><rect x="5" y="11.8" width="6" height="4" fill="#3fb052"/></svg>
<div class="t" style="left:423.6px;top:690.0px;font-size:12px;line-height:16px;letter-spacing:-0.40px;">Daten (K:)</div>
<svg class="a" style="left:496px;top:397px" width="10" height="10" viewBox="0 0 10 10"><path d="M5.6 .6 L9.4 4.4 L8.2 4.8 L6.6 6.4 L6.4 8.4 L1.6 3.6 L3.6 3.4 L5.2 1.8 Z" fill="#8a8a8a"/><path d="M3.8 6.2 L.8 9.2" stroke="#8a8a8a" stroke-width="1"/></svg>
<div class="a" style="left:510px;top:390px;width:16px;height:318px;background:#f0f0f0;"></div>
<div class="a" style="left:528px;top:390px;width:1px;height:318px;background:#f6f6f6;"></div>
<div class="a" style="left:510px;top:529px;width:15px;height:116px;background:#cdcdcd;"></div>
<svg class="a" style="left:513px;top:396px" width="9" height="6" viewBox="0 0 9 6"><path d="M.9 5.4 L4.5 1.7 L8.1 5.4" stroke="#404040" stroke-width="2" fill="none"/></svg>
<svg class="a" style="left:513px;top:696px" width="9" height="6" viewBox="0 0 9 6"><path d="M.9 .6 L4.5 4.3 L8.1 .6" stroke="#404040" stroke-width="2" fill="none"/></svg>
<div class="t" style="left:547.0px;top:395.0px;font-size:12px;line-height:16px;color:#4c607a;">Name</div>
<div class="t" style="left:808.0px;top:395.0px;font-size:12px;line-height:16px;color:#4c607a;letter-spacing:0.04px;">Änderungsdatum</div>
<div class="t" style="left:952.6px;top:395.0px;font-size:12px;line-height:16px;color:#4c607a;letter-spacing:-0.78px;">Typ</div>
<div class="t" style="left:1072.9px;top:395.0px;font-size:12px;line-height:16px;color:#4c607a;letter-spacing:-0.60px;">Größe</div>
<div class="a" style="left:801px;top:390px;width:1px;height:25px;background:#e5e5e5;"></div>
<div class="a" style="left:945px;top:390px;width:1px;height:25px;background:#e5e5e5;"></div>
<div class="a" style="left:1065px;top:390px;width:1px;height:25px;background:#e5e5e5;"></div>
<div class="a" style="left:1145px;top:390px;width:1px;height:25px;background:#e5e5e5;"></div>
<svg class="a" style="left:667px;top:390px" width="9" height="5" viewBox="0 0 9 5"><path d="M.6 4.4 L4.5 .8 L8.4 4.4" stroke="#7a7a7a" stroke-width="1" fill="none"/></svg>
<div class="a" style="left:544px;top:694px;width:598px;height:14px;background:#e5f3ff;"></div>
<svg class="a" style="left:548px;top:423px" width="16" height="16" viewBox="0 0 16 16"><path d="M4.6 1.5 Q4.6 .5 5.6 .5 H12.4 L15.4 3.5 V14.6 Q15.4 15.6 14.4 15.6 H5.6 Q4.6 15.6 4.6 14.6 Z" fill="#fff" stroke="#707070" stroke-width="1"/><path d="M12.4 .5 V3.5 H15.4" fill="#f2f2f2" stroke="#707070" stroke-width=".8"/><rect x="0" y="4.2" width="8.8" height="8.8" fill="#1e7145"/><path d="M2.5 6.2 L6.3 11 M6.3 6.2 L2.5 11" stroke="#fff" stroke-width="1.55"/><text x="12.1" y="11.4" font-family="Liberation Sans" font-size="9.5" fill="#2cae6a" stroke="#2cae6a" stroke-width=".25" text-anchor="middle">a</text></svg>
<div class="t" style="left:568.4px;top:424.0px;font-size:12px;line-height:16px;letter-spacing:-0.35px;">alle Zähler 2024.csv</div>
<div class="t" style="left:808.0px;top:424.0px;font-size:12px;line-height:16px;color:#6d6d6d;letter-spacing:-0.59px;">12.03.2024 14:32</div>
<div class="t" style="left:952.6px;top:424.0px;font-size:12px;line-height:16px;color:#6d6d6d;letter-spacing:-0.09px;">Microsoft Excel-C...</div>
<div class="t" style="left:1102.4px;top:424.0px;font-size:12px;line-height:16px;color:#6d6d6d;letter-spacing:-0.63px;">478 KB</div>
<svg class="a" style="left:548px;top:444px" width="16" height="16" viewBox="0 0 16 16"><path d="M4.6 1.5 Q4.6 .5 5.6 .5 H12.4 L15.4 3.5 V14.6 Q15.4 15.6 14.4 15.6 H5.6 Q4.6 15.6 4.6 14.6 Z" fill="#fff" stroke="#707070" stroke-width="1"/><path d="M12.4 .5 V3.5 H15.4" fill="#f2f2f2" stroke="#707070" stroke-width=".8"/><rect x="0" y="4.2" width="8.8" height="8.8" fill="#1e7145"/><path d="M2.5 6.2 L6.3 11 M6.3 6.2 L2.5 11" stroke="#fff" stroke-width="1.55"/><g stroke-width="1.1"><path d="M10 6.4H14" stroke="#2cae6a"/><path d="M10 8.6H14" stroke="#2cae6a"/><path d="M10 10.8H14" stroke="#17603a"/></g></svg>
<div class="t" style="left:568.4px;top:445.0px;font-size:12px;line-height:16px;letter-spacing:-0.34px;">alle Zähler 2024.xlsx</div>
<div class="t" style="left:808.0px;top:445.0px;font-size:12px;line-height:16px;color:#6d6d6d;letter-spacing:-0.59px;">12.03.2024 14:35</div>
<div class="t" style="left:952.6px;top:445.0px;font-size:12px;line-height:16px;color:#6d6d6d;letter-spacing:-0.05px;">Microsoft Excel-A...</div>
<div class="t" style="left:1102.4px;top:445.0px;font-size:12px;line-height:16px;color:#6d6d6d;letter-spacing:-0.63px;">281 KB</div>
<svg class="a" style="left:548px;top:465px" width="16" height="16" viewBox="0 0 16 16"><path d="M2.4 .5 H11 L14 3.5 V15.6 H2.4 Z" fill="#fff" stroke="#8c8c8c" stroke-width="1"/><path d="M11 .5 V3.5 H14" fill="#f2f2f2" stroke="#8c8c8c" stroke-width=".8"/></svg>
<div class="t" style="left:568.4px;top:466.0px;font-size:12px;line-height:16px;letter-spacing:-0.56px;">Ausbau MSB 06_2024</div>
<div class="t" style="left:808.0px;top:466.0px;font-size:12px;line-height:16px;color:#6d6d6d;letter-spacing:-0.59px;">09.08.2024 08:12</div>
<div class="t" style="left:952.6px;top:466.0px;font-size:12px;line-height:16px;color:#6d6d6d;letter-spacing:-0.40px;">Datei</div>
<div class="t" style="left:1114.6px;top:466.0px;font-size:12px;line-height:16px;color:#6d6d6d;letter-spacing:-0.65px;">1 KB</div>
<svg class="a" style="left:548px;top:486px" width="16" height="16" viewBox="0 0 16 16"><path d="M2.4 .5 H11 L14 3.5 V15.6 H2.4 Z" fill="#fff" stroke="#8c8c8c" stroke-width="1"/><path d="M11 .5 V3.5 H14" fill="#f2f2f2" stroke="#8c8c8c" stroke-width=".8"/></svg>
<div class="t" style="left:568.4px;top:487.0px;font-size:12px;line-height:16px;letter-spacing:-0.56px;">Ausbau MSB 12_2024</div>
<div class="t" style="left:808.0px;top:487.0px;font-size:12px;line-height:16px;color:#6d6d6d;letter-spacing:-0.59px;">27.01.2025 13:54</div>
<div class="t" style="left:952.6px;top:487.0px;font-size:12px;line-height:16px;color:#6d6d6d;letter-spacing:-0.40px;">Datei</div>
<div class="t" style="left:1114.6px;top:487.0px;font-size:12px;line-height:16px;color:#6d6d6d;letter-spacing:-0.65px;">1 KB</div>
<svg class="a" style="left:548px;top:507px" width="16" height="16" viewBox="0 0 16 16"><path d="M4.6 1.5 Q4.6 .5 5.6 .5 H12.4 L15.4 3.5 V14.6 Q15.4 15.6 14.4 15.6 H5.6 Q4.6 15.6 4.6 14.6 Z" fill="#fff" stroke="#707070" stroke-width="1"/><path d="M12.4 .5 V3.5 H15.4" fill="#f2f2f2" stroke="#707070" stroke-width=".8"/><rect x="0" y="4.2" width="8.8" height="8.8" fill="#1e7145"/><path d="M2.5 6.2 L6.3 11 M6.3 6.2 L2.5 11" stroke="#fff" stroke-width="1.55"/><text x="12.1" y="11.4" font-family="Liberation Sans" font-size="9.5" fill="#2cae6a" stroke="#2cae6a" stroke-width=".25" text-anchor="middle">a</text></svg>
<div class="t" style="left:568.4px;top:508.0px;font-size:12px;line-height:16px;letter-spacing:-0.41px;">Defekt 2024 02.csv</div>
<div class="t" style="left:808.0px;top:508.0px;font-size:12px;line-height:16px;color:#6d6d6d;letter-spacing:-0.59px;">16.04.2024 07:25</div>
<div class="t" style="left:952.6px;top:508.0px;font-size:12px;line-height:16px;color:#6d6d6d;letter-spacing:-0.09px;">Microsoft Excel-C...</div>
<div class="t" style="left:1115.0px;top:508.0px;font-size:12px;line-height:16px;color:#6d6d6d;letter-spacing:-0.75px;">2 KB</div>
<svg class="a" style="left:548px;top:528px" width="16" height="16" viewBox="0 0 16 16"><path d="M4.6 1.5 Q4.6 .5 5.6 .5 H12.4 L15.4 3.5 V14.6 Q15.4 15.6 14.4 15.6 H5.6 Q4.6 15.6 4.6 14.6 Z" fill="#fff" stroke="#707070" stroke-width="1"/><path d="M12.4 .5 V3.5 H15.4" fill="#f2f2f2" stroke="#707070" stroke-width=".8"/><rect x="0" y="4.2" width="8.8" height="8.8" fill="#1e7145"/><path d="M2.5 6.2 L6.3 11 M6.3 6.2 L2.5 11" stroke="#fff" stroke-width="1.55"/><text x="12.1" y="11.4" font-family="Liberation Sans" font-size="9.5" fill="#2cae6a" stroke="#2cae6a" stroke-width=".25" text-anchor="middle">a</text></svg>
<div class="t" style="left:568.4px;top:529.0px;font-size:12px;line-height:16px;letter-spacing:-0.41px;">Defekt 2024 03.csv</div>
<div class="t" style="left:808.0px;top:529.0px;font-size:12px;line-height:16px;color:#6d6d6d;letter-spacing:-0.59px;">16.04.2024 07:26</div>
<div class="t" style="left:952.6px;top:529.0px;font-size:12px;line-height:16px;color:#6d6d6d;letter-spacing:-0.09px;">Microsoft Excel-C...</div>
<div class="t" style="left:1115.0px;top:529.0px;font-size:12px;line-height:16px;color:#6d6d6d;letter-spacing:-0.75px;">2 KB</div>
<svg class="a" style="left:548px;top:549px" width="16" height="16" viewBox="0 0 16 16"><path d="M4.6 1.5 Q4.6 .5 5.6 .5 H12.4 L15.4 3.5 V14.6 Q15.4 15.6 14.4 15.6 H5.6 Q4.6 15.6 4.6 14.6 Z" fill="#fff" stroke="#707070" stroke-width="1"/><path d="M12.4 .5 V3.5 H15.4" fill="#f2f2f2" stroke="#707070" stroke-width=".8"/><rect x="0" y="4.2" width="8.8" height="8.8" fill="#1e7145"/><path d="M2.5 6.2 L6.3 11 M6.3 6.2 L2.5 11" stroke="#fff" stroke-width="1.55"/><text x="12.1" y="11.4" font-family="Liberation Sans" font-size="9.5" fill="#2cae6a" stroke="#2cae6a" stroke-width=".25" text-anchor="middle">a</text></svg>
<div class="t" style="left:568.4px;top:550.0px;font-size:12px;line-height:16px;letter-spacing:-0.27px;">GW kMe-mMe 2024 01.csv</div>
<div class="t" style="left:808.0px;top:550.0px;font-size:12px;line-height:16px;color:#6d6d6d;letter-spacing:-0.59px;">16.04.2024 07:28</div>
<div class="t" style="left:952.6px;top:550.0px;font-size:12px;line-height:16px;color:#6d6d6d;letter-spacing:-0.09px;">Microsoft Excel-C...</div>
<div class="t" style="left:1108.4px;top:550.0px;font-size:12px;line-height:16px;color:#6d6d6d;letter-spacing:-0.62px;">10 KB</div>
<svg class="a" style="left:548px;top:570px" width="16" height="16" viewBox="0 0 16 16"><path d="M4.6 1.5 Q4.6 .5 5.6 .5 H12.4 L15.4 3.5 V14.6 Q15.4 15.6 14.4 15.6 H5.6 Q4.6 15.6 4.6 14.6 Z" fill="#fff" stroke="#707070" stroke-width="1"/><path d="M12.4 .5 V3.5 H15.4" fill="#f2f2f2" stroke="#707070" stroke-width=".8"/><rect x="0" y="4.2" width="8.8" height="8.8" fill="#1e7145"/><path d="M2.5 6.2 L6.3 11 M6.3 6.2 L2.5 11" stroke="#fff" stroke-width="1.55"/><text x="12.1" y="11.4" font-family="Liberation Sans" font-size="9.5" fill="#2cae6a" stroke="#2cae6a" stroke-width=".25" text-anchor="middle">a</text></svg>
<div class="t" style="left:568.4px;top:571.0px;font-size:12px;line-height:16px;letter-spacing:-0.27px;">GW kMe-mMe 2024 02.csv</div>
<div class="t" style="left:808.0px;top:571.0px;font-size:12px;line-height:16px;color:#6d6d6d;letter-spacing:-0.59px;">16.04.2024 07:29</div>
<div class="t" style="left:952.6px;top:571.0px;font-size:12px;line-height:16px;color:#6d6d6d;letter-spacing:-0.09px;">Microsoft Excel-C...</div>
<div class="t" style="left:1115.0px;top:571.0px;font-size:12px;line-height:16px;color:#6d6d6d;letter-spacing:-0.75px;">5 KB</div>
<svg class="a" style="left:548px;top:591px" width="16" height="16" viewBox="0 0 16 16"><path d="M4.6 1.5 Q4.6 .5 5.6 .5 H12.4 L15.4 3.5 V14.6 Q15.4 15.6 14.4 15.6 H5.6 Q4.6 15.6 4.6 14.6 Z" fill="#fff" stroke="#707070" stroke-width="1"/><path d="M12.4 .5 V3.5 H15.4" fill="#f2f2f2" stroke="#707070" stroke-width=".8"/><rect x="0" y="4.2" width="8.8" height="8.8" fill="#1e7145"/><path d="M2.5 6.2 L6.3 11 M6.3 6.2 L2.5 11" stroke="#fff" stroke-width="1.55"/><text x="12.1" y="11.4" font-family="Liberation Sans" font-size="9.5" fill="#2cae6a" stroke="#2cae6a" stroke-width=".25" text-anchor="middle">a</text></svg>
<div class="t" style="left:568.4px;top:592.0px;font-size:12px;line-height:16px;letter-spacing:-0.33px;">GW kMe-mMe 2024_01.csv</div>
<div class="t" style="left:808.0px;top:592.0px;font-size:12px;line-height:16px;color:#6d6d6d;letter-spacing:-0.53px;">07.06.2024 11:47</div>
<div class="t" style="left:952.6px;top:592.0px;font-size:12px;line-height:16px;color:#6d6d6d;letter-spacing:-0.09px;">Microsoft Excel-C...</div>
<div class="t" style="left:1114.6px;top:592.0px;font-size:12px;line-height:16px;color:#6d6d6d;letter-spacing:-0.65px;">1 KB</div>
<svg class="a" style="left:548px;top:612px" width="16" height="16" viewBox="0 0 16 16"><path d="M4.6 1.5 Q4.6 .5 5.6 .5 H12.4 L15.4 3.5 V14.6 Q15.4 15.6 14.4 15.6 H5.6 Q4.6 15.6 4.6 14.6 Z" fill="#fff" stroke="#707070" stroke-width="1"/><path d="M12.4 .5 V3.5 H15.4" fill="#f2f2f2" stroke="#707070" stroke-width=".8"/><rect x="0" y="4.2" width="8.8" height="8.8" fill="#1e7145"/><path d="M2.5 6.2 L6.3 11 M6.3 6.2 L2.5 11" stroke="#fff" stroke-width="1.55"/><text x="12.1" y="11.4" font-family="Liberation Sans" font-size="9.5" fill="#2cae6a" stroke="#2cae6a" stroke-width=".25" text-anchor="middle">a</text></svg>
<div class="t" style="left:568.4px;top:613.0px;font-size:12px;line-height:16px;letter-spacing:-0.47px;">GW kME-mME 2024_03 .csv</div>
<div class="t" style="left:808.0px;top:613.0px;font-size:12px;line-height:16px;color:#6d6d6d;letter-spacing:-0.53px;">07.06.2024 11:42</div>
<div class="t" style="left:952.6px;top:613.0px;font-size:12px;line-height:16px;color:#6d6d6d;letter-spacing:-0.09px;">Microsoft Excel-C...</div>
<div class="t" style="left:1115.0px;top:613.0px;font-size:12px;line-height:16px;color:#6d6d6d;letter-spacing:-0.75px;">5 KB</div>
<svg class="a" style="left:548px;top:633px" width="16" height="16" viewBox="0 0 16 16"><path d="M4.6 1.5 Q4.6 .5 5.6 .5 H12.4 L15.4 3.5 V14.6 Q15.4 15.6 14.4 15.6 H5.6 Q4.6 15.6 4.6 14.6 Z" fill="#fff" stroke="#707070" stroke-width="1"/><path d="M12.4 .5 V3.5 H15.4" fill="#f2f2f2" stroke="#707070" stroke-width=".8"/><rect x="0" y="4.2" width="8.8" height="8.8" fill="#1e7145"/><path d="M2.5 6.2 L6.3 11 M6.3 6.2 L2.5 11" stroke="#fff" stroke-width="1.55"/><text x="12.1" y="11.4" font-family="Liberation Sans" font-size="9.5" fill="#2cae6a" stroke="#2cae6a" stroke-width=".25" text-anchor="middle">a</text></svg>
<div class="t" style="left:568.4px;top:634.0px;font-size:12px;line-height:16px;letter-spacing:-0.47px;">GW kME-mME 2024_04 .csv</div>
<div class="t" style="left:808.0px;top:634.0px;font-size:12px;line-height:16px;color:#6d6d6d;letter-spacing:-0.53px;">07.06.2024 11:43</div>
<div class="t" style="left:952.6px;top:634.0px;font-size:12px;line-height:16px;color:#6d6d6d;letter-spacing:-0.09px;">Microsoft Excel-C...</div>
<div class="t" style="left:1108.4px;top:634.0px;font-size:12px;line-height:16px;color:#6d6d6d;letter-spacing:-0.62px;">10 KB</div>
<svg class="a" style="left:548px;top:654px" width="16" height="16" viewBox="0 0 16 16"><path d="M4.6 1.5 Q4.6 .5 5.6 .5 H12.4 L15.4 3.5 V14.6 Q15.4 15.6 14.4 15.6 H5.6 Q4.6 15.6 4.6 14.6 Z" fill="#fff" stroke="#707070" stroke-width="1"/><path d="M12.4 .5 V3.5 H15.4" fill="#f2f2f2" stroke="#707070" stroke-width=".8"/><rect x="0" y="4.2" width="8.8" height="8.8" fill="#1e7145"/><path d="M2.5 6.2 L6.3 11 M6.3 6.2 L2.5 11" stroke="#fff" stroke-width="1.55"/><text x="12.1" y="11.4" font-family="Liberation Sans" font-size="9.5" fill="#2cae6a" stroke="#2cae6a" stroke-width=".25" text-anchor="middle">a</text></svg>
<div class="t" style="left:568.4px;top:655.0px;font-size:12px;line-height:16px;letter-spacing:-0.47px;">GW kME-mME 2024_05 .csv</div>
<div class="t" style="left:808.0px;top:655.0px;font-size:12px;line-height:16px;color:#6d6d6d;letter-spacing:-0.53px;">07.06.2024 11:44</div>
<div class="t" style="left:952.6px;top:655.0px;font-size:12px;line-height:16px;color:#6d6d6d;letter-spacing:-0.09px;">Microsoft Excel-C...</div>
<div class="t" style="left:1115.0px;top:655.0px;font-size:12px;line-height:16px;color:#6d6d6d;letter-spacing:-0.75px;">7 KB</div>
<svg class="a" style="left:548px;top:675px" width="16" height="16" viewBox="0 0 16 16"><path d="M4.6 1.5 Q4.6 .5 5.6 .5 H12.4 L15.4 3.5 V14.6 Q15.4 15.6 14.4 15.6 H5.6 Q4.6 15.6 4.6 14.6 Z" fill="#fff" stroke="#707070" stroke-width="1"/><path d="M12.4 .5 V3.5 H15.4" fill="#f2f2f2" stroke="#707070" stroke-width=".8"/><rect x="0" y="4.2" width="8.8" height="8.8" fill="#1e7145"/><path d="M2.5 6.2 L6.3 11 M6.3 6.2 L2.5 11" stroke="#fff" stroke-width="1.55"/><text x="12.1" y="11.4" font-family="Liberation Sans" font-size="9.5" fill="#2cae6a" stroke="#2cae6a" stroke-width=".25" text-anchor="middle">a</text></svg>
<div class="t" style="left:568.4px;top:676.0px;font-size:12px;line-height:16px;letter-spacing:-0.47px;">GW kME-mME 2024_08 .csv</div>
<div class="t" style="left:808.0px;top:676.0px;font-size:12px;line-height:16px;color:#6d6d6d;letter-spacing:-0.59px;">22.10.2024 12:08</div>
<div class="t" style="left:952.6px;top:676.0px;font-size:12px;line-height:16px;color:#6d6d6d;letter-spacing:-0.09px;">Microsoft Excel-C...</div>
<div class="t" style="left:1115.0px;top:676.0px;font-size:12px;line-height:16px;color:#6d6d6d;letter-spacing:-0.75px;">3 KB</div>
<svg class="a" style="left:548px;top:696px" width="16" height="16" viewBox="0 0 16 16"><path d="M4.6 1.5 Q4.6 .5 5.6 .5 H12.4 L15.4 3.5 V14.6 Q15.4 15.6 14.4 15.6 H5.6 Q4.6 15.6 4.6 14.6 Z" fill="#fff" stroke="#707070" stroke-width="1"/><path d="M12.4 .5 V3.5 H15.4" fill="#f2f2f2" stroke="#707070" stroke-width=".8"/><rect x="0" y="4.2" width="8.8" height="8.8" fill="#1e7145"/><path d="M2.5 6.2 L6.3 11 M6.3 6.2 L2.5 11" stroke="#fff" stroke-width="1.55"/><text x="12.1" y="11.4" font-family="Liberation Sans" font-size="9.5" fill="#2cae6a" stroke="#2cae6a" stroke-width=".25" text-anchor="middle">a</text></svg>
<div class="t" style="left:568.4px;top:697.0px;font-size:12px;line-height:16px;letter-spacing:-0.52px;">GW mME 2024_04 .csv</div>
<div class="t" style="left:808.0px;top:697.0px;font-size:12px;line-height:16px;color:#6d6d6d;letter-spacing:-0.59px;">22.10.2024 07:14</div>
<div class="t" style="left:952.6px;top:697.0px;font-size:12px;line-height:16px;color:#6d6d6d;letter-spacing:-0.12px;">Microsoft Excel-C</div>
<div class="t" style="left:1114.6px;top:697.0px;font-size:12px;line-height:16px;color:#6d6d6d;letter-spacing:-0.65px;">1 KB</div>
<div class="a" style="left:1298px;top:390px;width:15px;height:318px;background:#f0f0f0;"></div>
<div class="a" style="left:1298px;top:407px;width:15px;height:152px;background:#cdcdcd;"></div>
<svg class="a" style="left:1301px;top:396px" width="9" height="6" viewBox="0 0 9 6"><path d="M.9 5.4 L4.5 1.7 L8.1 5.4" stroke="#404040" stroke-width="2" fill="none"/></svg>
<svg class="a" style="left:1301px;top:696px" width="9" height="6" viewBox="0 0 9 6"><path d="M.9 .6 L4.5 4.3 L8.1 .6" stroke="#404040" stroke-width="2" fill="none"/></svg>
<div class="a" style="left:371px;top:708px;width:943px;height:117px;background:#f0f0f0;"></div>
<div class="a" style="left:946px;top:695px;width:152px;height:20px;background:rgba(255,255,255,.10);border:1px solid rgba(140,140,140,.34);box-shadow:2px 2px 3px rgba(0,0,0,.10)"></div>
<div class="a" style="left:1040px;top:694px;width:60px;height:14px;overflow:hidden"><div class="t" style="left:5px;top:3px;font-size:12px;line-height:16px;color:#c9ccd6;letter-spacing:-0.35px">SV-Datei</div></div>
<div class="t" style="left:430.5px;top:722.7px;font-size:12px;line-height:16px;letter-spacing:-0.19px;">Dateiname:</div>
<div class="a" style="left:495px;top:719px;width:814px;height:23px;background:#fff;border:1px solid #0078d7"></div>
<div class="t" style="left:501.4px;top:722.5px;font-size:12px;line-height:16px;letter-spacing:-0.43px;">Ausbau 11_2024.csv</div>
<svg class="a" style="left:1295px;top:728px" width="10" height="6" viewBox="0 0 10 6"><path d="M.8 .7 L5 5 L9.2 .7" stroke="#444" stroke-width="1.1" fill="none"/></svg>
<div class="t" style="left:443.4px;top:747.5px;font-size:12px;line-height:16px;letter-spacing:-0.08px;">Dateityp:</div>
<div class="a" style="left:495px;top:744px;width:814px;height:23px;background:#e1e1e1;border:1px solid #adadad"></div>
<svg class="a" style="left:1295px;top:753px" width="10" height="6" viewBox="0 0 10 6"><path d="M.8 .7 L5 5 L9.2 .7" stroke="#444" stroke-width="1.1" fill="none"/></svg>
<svg class="a" style="left:383px;top:799px" width="9" height="6" viewBox="0 0 9 6"><path d="M.8 5.2 L4.5 1.4 L8.2 5.2" stroke="#333" stroke-width="1.5" fill="none"/></svg>
<div class="t" style="left:400.6px;top:794.6px;font-size:12px;line-height:16px;letter-spacing:-0.16px;">Ordner ausblenden</div>
<div class="a" style="left:1106px;top:788px;width:90px;height:24px;background:#e1e1e1;border:2px solid #0078d7"></div>
<div class="t" style="left:1125.3px;top:792.0px;font-size:12px;line-height:16px;letter-spacing:-0.32px;">Speichern</div>
<div class="a" style="left:1210px;top:788px;width:86px;height:24px;background:#e1e1e1;border:1px solid #adadad"></div>
<div class="t" style="left:1224.4px;top:792.0px;font-size:12px;line-height:16px;letter-spacing:-0.08px;">Abbrechen</div>
<svg class="a" style="left:1302px;top:814px" width="10" height="10" viewBox="0 0 10 10"><g fill="#b8b8b8"><rect x="7" y="1" width="2" height="2"/><rect x="4" y="4" width="2" height="2"/><rect x="7" y="4" width="2" height="2"/><rect x="1" y="7" width="2" height="2"/><rect x="4" y="7" width="2" height="2"/><rect x="7" y="7" width="2" height="2"/></g></svg>
</body>
</html>
